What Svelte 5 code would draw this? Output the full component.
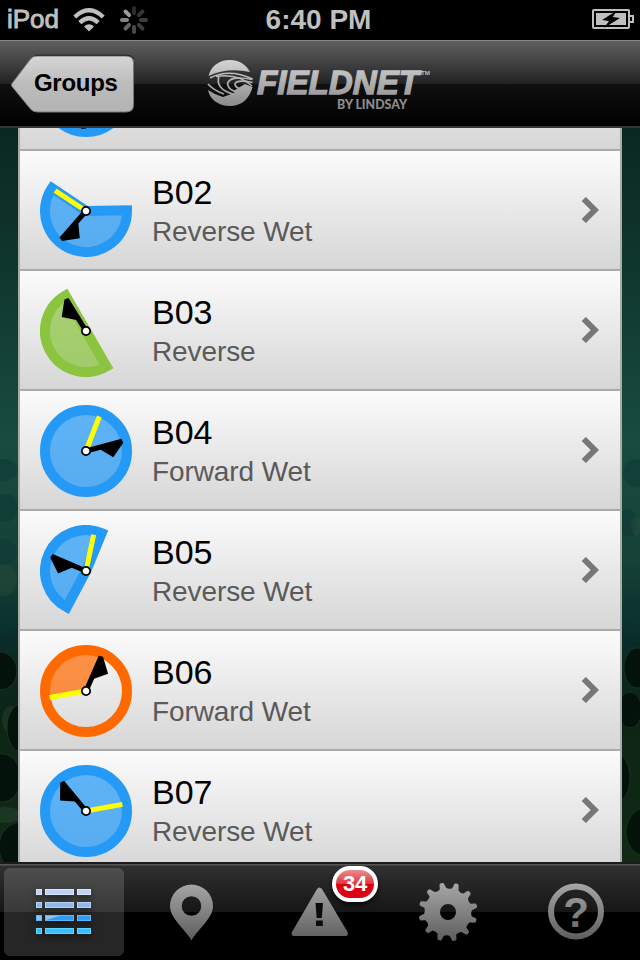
<script lang="ts">
  type Pivot = {
    name: string,
    status: string,
    color: string,
    arm: number,
    reverse?: boolean,
    stop?: number,
    sector?: [number, number],
    swept?: [number, number]
  };

  const BLUE = '#2499f6';
  const GREEN = '#8bc53f';
  const ORANGE = '#ff6a00';

  // Angles are in degrees, clockwise from east
  const pivots: Pivot[] = [
    { name: 'B01', status: 'Forward Wet', color: BLUE, arm: 94 },
    { name: 'B02', status: 'Reverse Wet', color: BLUE, arm: 131, reverse: true, stop: 213.3, sector: [-1, 214] },
    { name: 'B03', status: 'Reverse', color: GREEN, arm: 238, reverse: true, sector: [60, 240] },
    { name: 'B04', status: 'Forward Wet', color: BLUE, arm: -15, stop: -68.8 },
    { name: 'B05', status: 'Reverse Wet', color: BLUE, arm: 203, reverse: true, stop: -78, sector: [118, 292.5] },
    { name: 'B06', status: 'Forward Wet', color: ORANGE, arm: -66, stop: 170, swept: [170, 294] },
    { name: 'B07', status: 'Reverse Wet', color: BLUE, arm: 230, reverse: true, stop: -10.3 }
  ];

  const spokes = [
    [0, '#3c3c3c'], [45, '#3c3c3c'], [90, '#484848'], [135, '#666'],
    [180, '#858585'], [225, '#9c9c9c'], [270, '#2c2c2c'], [315, '#343434']
  ];

  const barRows = [
    { y: 0, edge: '#d9e6fb', fill: '#bdd3f5' },
    { y: 13, edge: '#b4d3f7', fill: '#8db9ea' },
    { y: 26, edge: '#5cb8fb', fill: '#2f9df5' },
    { y: 39, edge: '#62d3ff', fill: '#3abdfb' }
  ];

  function point(angle: number, radius: number): string {
    const a = angle * Math.PI / 180;
    return `${(radius * Math.cos(a)).toFixed(2)} ${(radius * Math.sin(a)).toFixed(2)}`;
  }

  function wedge([from, to]: [number, number], radius: number): string {
    const large = to - from > 180 ? 1 : 0;
    return `M0 0L${point(from, radius)}A${radius} ${radius} 0 ${large} 1 ${point(to, radius)}Z`;
  }

  function gearPath(): string {
    let d = '';
    for (let i = 0; i < 12; i++) {
      const a = i * 30 - 12;
      d += `${i ? 'L' : 'M'}${point(a - 8, 24)}L${point(a - 5, 29)}Q${point(a, 30.5)} ${point(a + 3.5, 29)}L${point(a + 8, 24)}Q${point(a + 14, 22.5)} ${point(a + 22, 24)}`;
    }
    return d + 'ZM8 0A8 8 0 1 0 -8 0A8 8 0 1 0 8 0Z';
  }
</script>

<div class="screen">
  <div class="status">
    <div class="carrier">
      <span>iPod</span>
      <svg width="32" height="24" viewBox="0 0 32 24">
        <g fill="none" stroke="#bfbfbf" stroke-width="4.400">
          <path d="M1.800 9Q16 -4.400 30.200 9" />
          <path d="M6.800 14.600Q16 6 25.200 14.600" />
        </g>
        <path d="M11 18.600Q16 14 21 18.600L16 23.600Z" fill="#bfbfbf" />
      </svg>
      <svg width="28" height="28" viewBox="-14 -14 28 28">
        {#each spokes as [angle, color]}
          <line x1="7" x2="12" y1="0" y2="0" stroke={color} stroke-width="4" stroke-linecap="round" transform="rotate({angle})" />
        {/each}
      </svg>
    </div>
    <div class="time">6:40 PM</div>
    <svg class="battery" width="42" height="20" viewBox="0 0 42 20">
      <rect x="1" y="1" width="36" height="18" rx="1" fill="none" stroke="#bfbfbf" stroke-width="2" />
      <rect x="4" y="4" width="30" height="12" fill="#bfbfbf" />
      <path d="M38 7H41V13H38" fill="none" stroke="#bfbfbf" stroke-width="2" />
      <path d="M25 1.500L10 11L17 12L12 19L28 9L20.800 8Z" fill="#000" />
    </svg>
  </div>

  <header>
    <button class="back">
      <svg width="126" height="62" viewBox="0 0 126 62">
        <defs>
          <linearGradient id="back-fill" x2="0" y2="1">
            <stop offset="0" stop-color="#d6d6d6" />
            <stop offset=".5" stop-color="#bcbcbc" />
            <stop offset="1" stop-color="#b3b3b3" />
          </linearGradient>
        </defs>
        <path d="M27 2H116Q123.500 2 123.500 9V51Q123.500 58 116 58H27Q23 58 20.500 55L2 32.500Q1 31 2 29.500L20.500 5Q23 2 27 2Z" fill="url(#back-fill)" stroke="#777" />
        <path d="M25 1.200H117Q122 1.200 124 5" fill="none" stroke="#222" />
      </svg>
      <span>Groups</span>
    </button>
    <svg class="logo" width="226" height="62" viewBox="0 0 226 62">
      <defs>
        <linearGradient id="silver" gradientUnits="userSpaceOnUse" x1="0" y1="4" x2="0" y2="50">
          <stop offset="0" stop-color="#d4d4d4" />
          <stop offset="1" stop-color="#8a8a8a" />
        </linearGradient>
      </defs>
      <g fill="url(#silver)">
        <path d="M1.500 20C4 10 12 4 23 4C33 4 39.500 9 43 16Q20 11 1.500 20Z" />
        <path d="M1 34Q8 39 16 41Q28 37 36 32L45.500 31C43 42 35 50 23 50C12 50 3 44 1 34Z" />
        <path d="M28 34L38 28L45.500 31L41 37L26 41Z" />
      </g>
      <g fill="none" stroke="url(#silver)" stroke-width="1.700">
        <path d="M3 22Q22 12 45.500 23" />
        <path d="M12 20Q8 33 26 38" />
        <path d="M9 20.500Q31 17 45 30" />
        <path d="M45.500 23.500Q22 19 20.500 28Q22 35 31 36" />
        <path d="M45.500 26.500Q27 23 28 29Q30 33 36 33" />
        <path d="M1 28Q6 34 17 38" />
      </g>
      <text class="brand" x="50" y="38" textLength="162" lengthAdjust="spacingAndGlyphs">FIELDNET</text>
      <text class="tm" x="214" y="18.500" textLength="9" lengthAdjust="spacingAndGlyphs">TM</text>
      <text class="by" x="130" y="53" textLength="70" lengthAdjust="spacingAndGlyphs">BY LINDSAY</text>
    </svg>
  </header>

  <main>
    <svg class="fields" width="640" height="734" viewBox="0 0 640 734" preserveAspectRatio="none">
      <g fill="#0a3531" opacity=".4">
        <ellipse cx="2" cy="342" rx="16" ry="11" />
        <ellipse cx="6" cy="380" rx="12" ry="14" />
        <ellipse cx="3" cy="424" rx="14" ry="13" />
        <ellipse cx="2" cy="490" rx="14" ry="15" />
        <ellipse cx="637" cy="345" rx="14" ry="14" />
        <ellipse cx="628" cy="395" rx="9" ry="14" />
        <ellipse cx="634" cy="482" rx="13" ry="15" />
      </g>
      <g fill="#33503b" opacity=".35">
        <ellipse cx="4" cy="452" rx="13" ry="16" />
        <ellipse cx="12" cy="592" rx="10" ry="14" />
        <ellipse cx="636" cy="398" rx="5" ry="9" />
        <ellipse cx="5" cy="687" rx="16" ry="8" />
      </g>
      <g fill="#03120b" stroke="#284128" stroke-opacity=".6">
        <ellipse cx="0" cy="543" rx="17" ry="19" />
        <ellipse cx="21" cy="600" rx="14" ry="24" />
        <ellipse cx="2" cy="650" rx="19" ry="24" />
        <ellipse cx="21" cy="719" rx="22" ry="25" />
        <ellipse cx="637" cy="540" rx="13" ry="20" />
        <ellipse cx="630" cy="582" rx="12" ry="18" />
        <ellipse cx="618" cy="650" rx="12" ry="23" />
        <ellipse cx="646" cy="704" rx="20" ry="24" />
      </g>
    </svg>
    <ul>
      {#each pivots as pivot}
        <li>
          <svg class="pivot" width="92" height="92" viewBox="-46 -46 92 92">
            {#if pivot.sector}
              <path d={wedge(pivot.sector, 41)} fill={pivot.color} fill-opacity=".72" />
              <path d={wedge(pivot.sector, 41)} fill="none" stroke={pivot.color} stroke-width="10" />
            {:else}
              {#if pivot.swept}
                <path d={wedge(pivot.swept, 41)} fill={pivot.color} fill-opacity=".72" />
              {:else}
                <circle r="37" fill={pivot.color} fill-opacity=".72" />
              {/if}
              <circle r="41" fill="none" stroke={pivot.color} stroke-width="10" />
            {/if}
            {#if pivot.stop !== undefined}
              <line x2="37" y2="0" stroke="#ff0" stroke-width="5" transform="rotate({pivot.stop})" />
            {/if}
            <path d="M0 -2.500L37.300 -2.700L38.200 1.600L24.700 13.200L14.500 2.500H0Z" transform="rotate({pivot.arm}) scale(1 {pivot.reverse ? -1 : 1})" />
            <circle r="4.200" fill="#fff" stroke="#000" stroke-width="1.700" />
          </svg>
          <div class="label">
            <div class="name">{pivot.name}</div>
            <div class="state">{pivot.status}</div>
          </div>
          <svg class="chevron" width="18" height="28" viewBox="0 0 18 28">
            <path d="M2.800 3L13.800 14L2.800 25" fill="none" stroke="#777" stroke-width="6" />
          </svg>
        </li>
      {/each}
    </ul>
  </main>

  <nav>
    <svg class="defs" width="0" height="0">
      <defs>
        <linearGradient id="tab-icon" gradientUnits="userSpaceOnUse" x1="0" y1="-28" x2="0" y2="28">
          <stop offset="0" stop-color="#a6a6a6" />
          <stop offset="1" stop-color="#5e5e5e" />
        </linearGradient>
      </defs>
    </svg>
    <button class="tab active">
      <svg width="56" height="46" viewBox="0 0 56 46">
        {#each barRows as row}
          <g fill={row.fill} stroke={row.edge}>
            <rect x=".5" y={row.y + 0.5} width="5" height="5" />
            <rect x="9.500" y={row.y + 0.5} width="28" height="5" />
            <rect x="41.500" y={row.y + 0.5} width="13" height="5" />
          </g>
        {/each}
        <path d="M1 27H5V31H1ZM10 27H23L10 31Z" fill="#8cc4f5" />
      </svg>
    </button>
    <button class="tab">
      <svg width="60" height="60" viewBox="-30 -30 60 60">
        <path d="M-.500 28.500C-5 19 -22 7 -22 -6A21.500 21.500 0 0 1 21 -6C21 7 4 19 -.500 28.500ZM9.300 -6A9.800 9.800 0 1 0 -10.300 -6A9.800 9.800 0 1 0 9.300 -6Z" fill="url(#tab-icon)" fill-rule="evenodd" />
      </svg>
    </button>
    <button class="tab">
      <svg width="60" height="60" viewBox="-30 -30 60 60">
        <path d="M-3 -23Q-.500 -26 2 -23L27.500 20Q29 24 25.500 24H-26Q-29.500 24 -28 20Z" fill="url(#tab-icon)" />
        <path d="M-4.500 -9H3L1.800 6H-3.300ZM-4 8.500H2.800V14H-4Z" fill="#0c0c0c" />
      </svg>
      <span class="badge">34</span>
    </button>
    <button class="tab">
      <svg width="62" height="62" viewBox="-31 -31 62 62">
        <path d={gearPath()} fill="url(#tab-icon)" fill-rule="evenodd" />
      </svg>
    </button>
    <button class="tab">
      <svg width="60" height="60" viewBox="-30 -30 60 60">
        <circle cy="-.500" r="25" fill="none" stroke="url(#tab-icon)" stroke-width="6" />
        <text class="question" x="0" y="15" text-anchor="middle">?</text>
      </svg>
    </button>
  </nav>
</div>

<style>
  :global(body) {
    background: #000;
  }

  .screen {
    display: flex;
    flex-direction: column;
    width: 640px;
    height: 960px;
    overflow: hidden;
    font-family: "Liberation Sans", Arial, sans-serif;
  }

  button {
    padding: 0;
    border: 0;
    background: none;
    font-family: inherit;
  }

  svg {
    display: block;
    flex: none;
  }

  .status {
    display: grid;
    grid-template-columns: 1fr auto 1fr;
    align-items: center;
    height: 40px;
    padding: 0 6px 0 7px;
    box-sizing: border-box;
    background: #000;
    color: #bfbfbf;
  }

  .carrier {
    display: flex;
    align-items: center;
    font-size: 26px;
    -webkit-text-stroke: 0.9px #bfbfbf;
  }

  .carrier span {
    width: 66px;
    margin-top: -2px;
  }

  .carrier svg + svg {
    margin-left: 15px;
  }

  .time {
    margin: -1px 4px 0 0;
    font-size: 28px;
    font-weight: bold;
  }

  .battery {
    justify-self: end;
    margin-top: -2px;
  }

  header {
    display: flex;
    align-items: flex-start;
    height: 88px;
    box-sizing: border-box;
    border-top: 1px solid #858585;
    border-bottom: 2px solid #333;
    background: linear-gradient(#606060, #222 43px, #101010 43px, #000);
  }

  .back {
    display: grid;
    margin: 13px 0 0 10px;
  }

  .back svg,
  .back span {
    grid-area: 1 / 1;
  }

  .back span {
    align-self: center;
    padding: 0 0 4px 24px;
    text-align: left;
    font-size: 24px;
    font-weight: bold;
    letter-spacing: -0.3px;
    color: #000;
  }

  .logo {
    margin: 15px 0 0 71px;
    fill: url(#silver);
  }

  .brand {
    font-size: 33px;
    font-weight: bold;
    font-style: italic;
    stroke: url(#silver);
    stroke-width: 1.3px;
  }

  .tm {
    font-size: 6px;
    font-weight: bold;
  }

  .by {
    font-family: Lato, sans-serif;
    font-size: 12.5px;
    font-weight: 900;
  }

  main {
    position: relative;
    height: 734px;
    overflow: hidden;
    background: linear-gradient(#0a2822, #10382f 150px, #184b41 310px, #164238 430px, #0a2d2b 510px, #0c2415 580px, #102a15);
  }

  .fields {
    position: absolute;
    top: 0;
    left: 0;
  }

  ul {
    position: relative;
    width: 600px;
    margin: -97px 18px 0;
    padding: 0;
    border: solid #aaa;
    border-width: 0 2px;
    list-style: none;
  }

  li {
    display: flex;
    align-items: flex-start;
    height: 120px;
    padding: 14px 21px 0 20px;
    box-sizing: border-box;
    border-bottom: 2px solid #aaa;
    background: linear-gradient(#fbfbfb, #d6d6d6);
  }

  .label {
    flex: 1;
    padding: 7px 0 0 20px;
  }

  .name {
    line-height: 40px;
    font-size: 34px;
    color: #000;
  }

  .state {
    line-height: 40px;
    font-size: 28px;
    letter-spacing: -0.1px;
    color: #5a5a5a;
  }

  .chevron {
    margin-top: 31px;
  }

  nav {
    display: flex;
    height: 98px;
    box-sizing: border-box;
    border-top: 2px solid #1b1b1d;
    background: linear-gradient(#555 1px, #303030 2px, #161616 48px, #000 48px);
  }

  .defs {
    position: absolute;
  }

  .tab {
    position: relative;
    display: flex;
    align-items: center;
    justify-content: center;
    width: 120px;
    height: 88px;
    margin: 4px;
    border-radius: 6px;
  }

  .active {
    background: rgba(255, 255, 255, 0.15);
  }

  .active svg {
    filter: drop-shadow(0 3px 3px rgba(0, 0, 0, 0.5));
  }

  .badge {
    position: absolute;
    top: -2px;
    left: 72px;
    width: 46px;
    height: 36px;
    box-sizing: border-box;
    border: 4px solid #fff;
    border-radius: 18px;
    background: linear-gradient(#ec8b90, #df3540 50%, #d8000f 50%, #dc0414);
    box-shadow: 0 3px 4px rgba(0, 0, 0, 0.7);
    line-height: 28px;
    font-size: 22px;
    font-weight: bold;
    letter-spacing: -0.3px;
    color: #fff;
  }

  .question {
    font-size: 42px;
    font-weight: bold;
    fill: url(#tab-icon);
  }
</style>
